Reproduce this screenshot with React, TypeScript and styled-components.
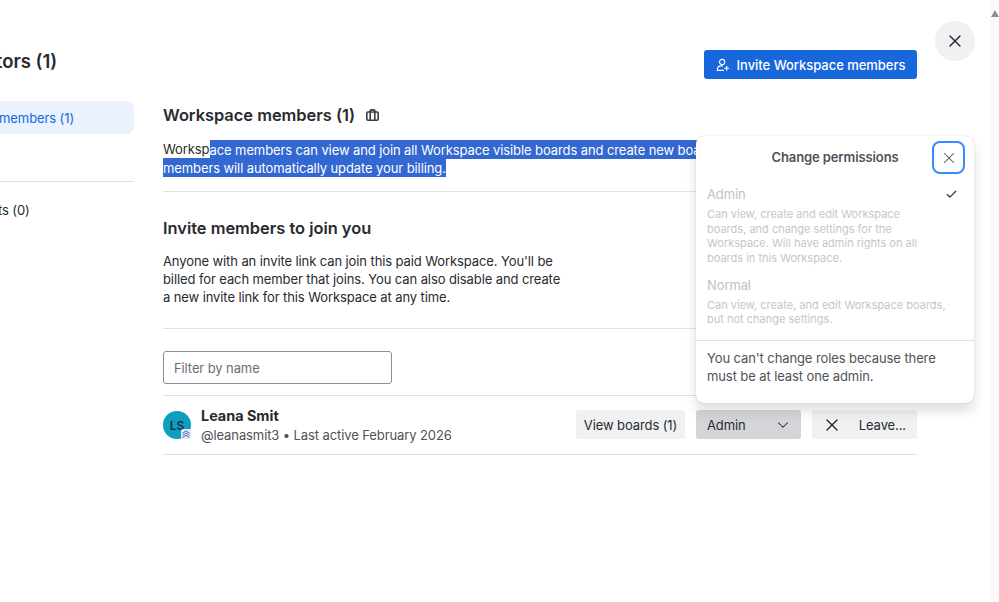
import React from 'react';
import styled, { createGlobalStyle } from 'styled-components';
import { Check, ChevronDown, X } from 'lucide-react';

const GlobalStyle = createGlobalStyle`
  html, body {
    margin: 0;
    height: 100%;
    overflow: hidden;
    background: #fff;
  }

  body {
    font-family: Inter, "Liberation Sans", sans-serif;
    font-size: 13px;
    letter-spacing: -0.1px;
    color: #292a2e;
  }

  button, input {
    letter-spacing: -0.1px;
  }
`;

const Page = styled.div`
  position: relative;
  display: flex;
  width: 999px;
  height: 602px;
  overflow: hidden;
`;

const Content = styled.div`
  flex: 1;
  display: flex;
  min-width: 0;
  overflow: hidden;
`;

const Sidebar = styled.aside`
  flex: none;
  width: 233px;
  margin-left: -99px;
  padding-top: 49px;
`;

const SidebarTitle = styled.h2`
  margin: 0 0 28px;
  padding-left: 9px;
  font-size: 18.5px;
  line-height: 24px;
  font-weight: 600;
  letter-spacing: 0;
  white-space: nowrap;
`;

const SideItem = styled.div<{ $active?: boolean }>`
  height: 33px;
  padding-left: 26px;
  display: flex;
  align-items: center;
  border-radius: 8px;
  white-space: nowrap;
  background: ${(p) => (p.$active ? '#e9f2fe' : 'transparent')};
  color: ${(p) => (p.$active ? '#1868db' : '#292a2e')};
`;

const SideDivider = styled.div`
  height: 1px;
  margin: 14px 0 11px;
  background: #dcdfe4;
`;

const Main = styled.main`
  flex: none;
  width: 754px;
  margin-left: 29px;
  padding-top: 50px;
`;

const TopBar = styled.div`
  display: flex;
  justify-content: flex-end;
  margin-bottom: 24px;
`;

const InviteButton = styled.button`
  height: 29px;
  width: 213px;
  display: flex;
  align-items: center;
  justify-content: center;
  gap: 7px;
  border: 0;
  border-radius: 3px;
  background: #1868db;
  color: #fff;
  font: 500 13px Inter, sans-serif;
  letter-spacing: -0.03px;
  white-space: nowrap;
`;

const TitleRow = styled.div`
  display: flex;
  align-items: center;
  gap: 11px;
  height: 24px;
  margin-bottom: 13px;
`;

const SectionTitle = styled.h3`
  margin: 0;
  font-size: 16.4px;
  line-height: 24px;
  font-weight: 600;
  letter-spacing: 0;
`;

const Lead = styled.p`
  margin: 0;
  line-height: 18px;
  white-space: nowrap;
`;

const Selected = styled.span`
  background: #3367d1;
  color: #fff;
  padding: 1.5px 0;
`;

const Divider = styled.div<{ $gap?: number }>`
  height: 1px;
  background: #dfe1e6;
  margin-top: ${(p) => p.$gap ?? 0}px;
`;

const InviteSection = styled.section`
  padding-top: 24px;
`;

const InviteText = styled.p`
  margin: 12px 0 0;
  line-height: 18px;
  white-space: nowrap;
`;

const FilterBar = styled.div`
  padding: 22px 0 11px;
`;

const FilterInput = styled.input`
  display: block;
  box-sizing: border-box;
  width: 229px;
  height: 33px;
  padding: 0 10px;
  border: 1px solid #8c8f97;
  border-radius: 3px;
  font: 400 13px Inter, sans-serif;
  color: #292a2e;

  &::placeholder {
    color: #6b6e76;
    opacity: 1;
  }
`;

const MemberRow = styled.div`
  display: flex;
  align-items: center;
  height: 58px;
  border-top: 1px solid #dfe1e6;
  border-bottom: 1px solid #dfe1e6;
`;

const Avatar = styled.div`
  position: relative;
  flex: none;
  width: 28px;
  height: 28px;
  margin-right: 10px;
  border-radius: 50%;
  background: #0d9fbe;
  color: #172b4d;
  font-size: 12px;
  font-weight: 600;
  letter-spacing: 0;
  display: flex;
  align-items: center;
  justify-content: center;
`;

const AvatarBadge = styled.span`
  position: absolute;
  right: 0;
  bottom: 0;
  width: 10px;
  height: 10px;
  border-radius: 2px;
  background: #e6ecf8;
  display: flex;
`;

const MemberInfo = styled.div`
  display: flex;
  flex-direction: column;
  margin-bottom: 1px;
`;

const MemberName = styled.div`
  font-size: 14.4px;
  line-height: 20px;
  font-weight: 700;
  letter-spacing: 0;
`;

const MemberMeta = styled.div`
  line-height: 18px;
  color: #505258;
`;

const Actions = styled.div`
  margin-left: auto;
  margin-bottom: 1px;
  display: flex;
  gap: 11px;
`;

const ActionButton = styled.button<{ $width: number; $pressed?: boolean; $center?: boolean }>`
  box-sizing: border-box;
  width: ${(p) => p.$width}px;
  height: 29px;
  padding: 0 11px;
  display: flex;
  align-items: center;
  justify-content: ${(p) => (p.$center ? 'center' : 'space-between')};
  border: 0;
  border-radius: 3px;
  background: ${(p) => (p.$pressed ? '#d3d5d9' : '#f0f1f2')};
  color: #292a2e;
  font: 400 13px Inter, sans-serif;
  white-space: nowrap;
`;

const ChevronSlot = styled.span`
  display: flex;
  margin-right: -2px;
`;

const LeaveIcon = styled.span`
  display: flex;
  margin-left: -1px;
`;

const Scrollbar = styled.div`
  flex: none;
  width: 9px;
  background: #fafafa;
  padding-top: 10px;
`;

const ScrollArrow = styled.div`
  width: 0;
  height: 0;
  margin-left: 1px;
  border-left: 4px solid transparent;
  border-right: 4px solid transparent;
  border-bottom: 7px solid #8f8f8f;
`;

const CloseDialog = styled.button`
  position: absolute;
  left: 935px;
  top: 21px;
  width: 40px;
  height: 40px;
  padding: 0;
  border: 0;
  border-radius: 50%;
  background: #f0f1f2;
  color: #292a2e;
  display: flex;
  align-items: center;
  justify-content: center;
`;

const Popover = styled.div`
  position: absolute;
  left: 696px;
  top: 136px;
  width: 278px;
  height: 267px;
  box-sizing: border-box;
  background: #fff;
  border-radius: 8px;
  box-shadow: 0 8px 12px rgba(30, 31, 33, 0.15), 0 0 1px rgba(30, 31, 33, 0.31);
`;

const PopoverHead = styled.div`
  height: 42px;
  display: flex;
  align-items: center;
  justify-content: center;
  font-weight: 600;
  color: #505258;
`;

const PopoverClose = styled.button`
  position: absolute;
  left: 236px;
  top: 5px;
  box-sizing: border-box;
  width: 33px;
  height: 33px;
  padding: 0;
  display: flex;
  align-items: center;
  justify-content: center;
  background: #fff;
  border: 2px solid #388bff;
  border-radius: 8px;
  color: #505258;
`;

const RoleList = styled.div`
  padding: 7px 11px 13px;
`;

const Role = styled.div`
  margin-bottom: 10px;

  &:last-child {
    margin-bottom: 0;
  }
`;

const RoleName = styled.div`
  display: flex;
  align-items: center;
  justify-content: space-between;
  height: 18px;
  margin-bottom: 4px;
  padding-right: 5px;
  line-height: 18px;
  color: #bfc1c6;
`;

const RoleText = styled.div<{ $width: number }>`
  width: ${(p) => p.$width}px;
  font-size: 11px;
  line-height: 14.67px;
  letter-spacing: 0;
  color: #c4c6cb;
`;

const PopoverNote = styled.div`
  border-top: 1px solid #dfe1e6;
  padding: 8px 11px 0;
  line-height: 18px;
  color: #505258;
`;

const InviteIcon = () => (
  <svg width="14" height="14" viewBox="0 0 16 16" fill="none" stroke="#fff" strokeWidth="1.3" strokeLinecap="round">
    <circle cx="7" cy="4.5" r="3" />
    <path d="M1.5 14.2c0-3.2 1.8-5.2 4.4-5.2h1.6M1.5 14.2h7" />
    <path d="M12.2 9.4v4.6M9.9 11.7h4.6" />
  </svg>
);

const BriefcaseIcon = () => (
  <svg width="13" height="12" viewBox="0 0 13 12" fill="none" stroke="#3a3c41" strokeWidth="1.6">
    <rect x="0.8" y="3" width="11.4" height="8.2" rx="1.2" />
    <path d="M4.2 11V1.7c0-.5.3-.8.8-.8h3c.5 0 .8.3.8.8V11" />
  </svg>
);

const BadgeIcon = () => (
  <svg width="10" height="10" viewBox="0 0 10 10" fill="none" stroke="#3b5bb5" strokeWidth="0.9">
    <path d="M1.5 4.2 5 1.8l3.5 2.4M1.5 6.4 5 4l3.5 2.4M1.5 8.6 5 6.2l3.5 2.4" />
  </svg>
);

export default function App() {
  return (
    <>
      <GlobalStyle />
      <Page>
        <Content>
          <Sidebar>
            <SidebarTitle>Collaborators (1)</SidebarTitle>
            <SideItem $active>Workspace members (1)</SideItem>
            <SideItem>Guests (0)</SideItem>
            <SideDivider />
            <SideItem>Join requests (0)</SideItem>
          </Sidebar>
          <Main>
            <TopBar>
              <InviteButton>
                <InviteIcon />
                Invite Workspace members
              </InviteButton>
            </TopBar>
            <TitleRow>
              <SectionTitle>Workspace members (1)</SectionTitle>
              <BriefcaseIcon />
            </TitleRow>
            <Lead>
              Worksp
              <Selected>ace members can view and join all Workspace visible boards and create new boards in the Workspace. Adding new</Selected>
              <br />
              <Selected>members will automatically update your billing.</Selected>
            </Lead>
            <Divider $gap={15} />
            <InviteSection>
              <SectionTitle>Invite members to join you</SectionTitle>
              <InviteText>
                Anyone with an invite link can join this paid Workspace. You'll be
                <br />
                billed for each member that joins. You can also disable and create
                <br />
                a new invite link for this Workspace at any time.
              </InviteText>
            </InviteSection>
            <Divider $gap={22} />
            <FilterBar>
              <FilterInput placeholder="Filter by name" />
            </FilterBar>
            <MemberRow>
              <Avatar>
                LS
                <AvatarBadge>
                  <BadgeIcon />
                </AvatarBadge>
              </Avatar>
              <MemberInfo>
                <MemberName>Leana Smit</MemberName>
                <MemberMeta>@leanasmit3 • Last active February 2026</MemberMeta>
              </MemberInfo>
              <Actions>
                <ActionButton $width={109} $center>View boards (1)</ActionButton>
                <ActionButton $width={105} $pressed>
                  Admin
                  <ChevronSlot>
                    <ChevronDown size={18} strokeWidth={1.4} />
                  </ChevronSlot>
                </ActionButton>
                <ActionButton $width={105}>
                  <LeaveIcon>
                    <X size={20} strokeWidth={1.7} />
                  </LeaveIcon>
                  Leave...
                </ActionButton>
              </Actions>
            </MemberRow>
          </Main>
        </Content>
        <Scrollbar>
          <ScrollArrow />
        </Scrollbar>
        <CloseDialog aria-label="Close">
          <X size={20} strokeWidth={1.7} />
        </CloseDialog>
        <Popover>
          <PopoverHead>
            Change permissions
            <PopoverClose aria-label="Close popover">
              <X size={18} strokeWidth={1.4} />
            </PopoverClose>
          </PopoverHead>
          <RoleList>
            <Role>
              <RoleName>
                Admin
                <Check size={13} strokeWidth={2} color="#292a2e" />
              </RoleName>
              <RoleText $width={215}>
                Can view, create and edit Workspace boards, and change settings for the Workspace. Will have admin rights on all boards in this Workspace.
              </RoleText>
            </Role>
            <Role>
              <RoleName>Normal</RoleName>
              <RoleText $width={244}>Can view, create, and edit Workspace boards, but not change settings.</RoleText>
            </Role>
          </RoleList>
          <PopoverNote>You can't change roles because there must be at least one admin.</PopoverNote>
        </Popover>
      </Page>
    </>
  );
}
